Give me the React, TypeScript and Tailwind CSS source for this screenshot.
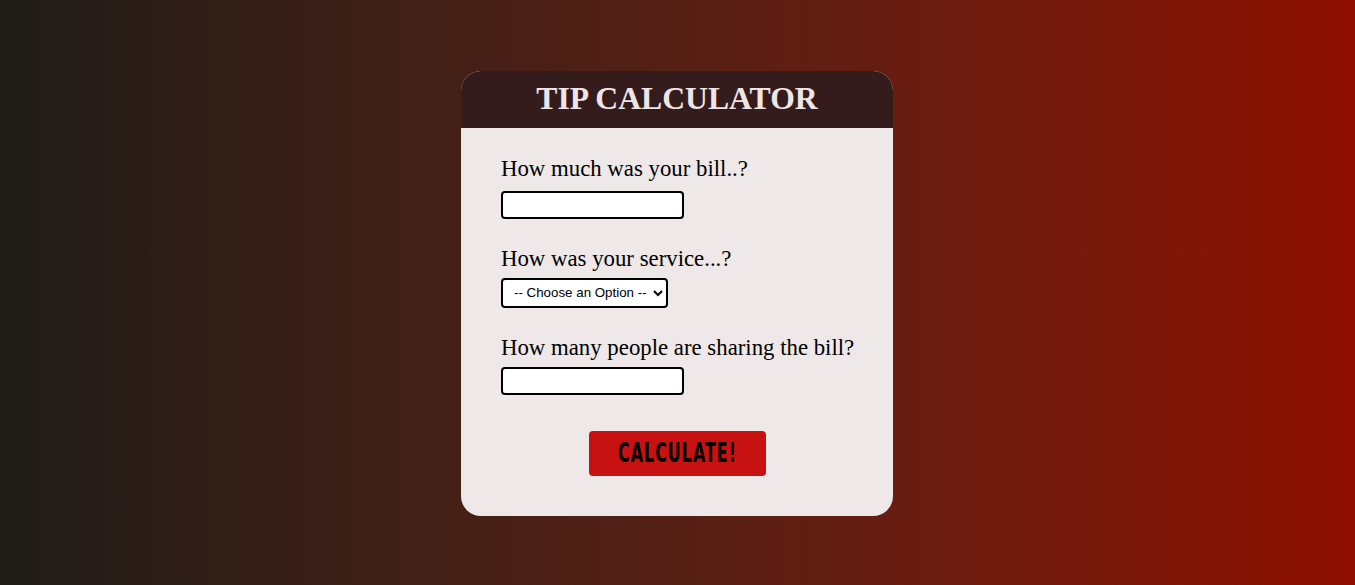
import { FC } from 'react'

const Label: FC<{ text: string }> = ({ text }) => (
  <label className="block whitespace-nowrap text-[22.8px] leading-[28px] text-black">{text}</label>
)

export default function App() {
  return (
    <main className="h-[585px] w-full flex items-center justify-center pr-[1px] pt-[1px] bg-gradient-to-r from-[#1f1c18] to-[#8e0e00] font-['Liberation_Serif',serif]">
      <div className="w-[432px] rounded-[20px] overflow-hidden bg-[#eee8e8]">
        <header className="h-[57px] bg-[#351c1c] flex items-center justify-center">
          <h1 className="text-[31.7px] font-bold text-[#eee6e6]">TIP CALCULATOR</h1>
        </header>
        <form className="px-10 pt-[27px] pb-10 flex flex-col" onSubmit={(e) => e.preventDefault()}>
          <Label text="How much was your bill..?" />
          <input
            type="text"
            className="mt-[8px] w-[183px] h-[28px] border-2 border-black rounded-[4px] bg-white outline-none"
          />
          <div className="mt-[26px]">
            <Label text="How was your service...?" />
          </div>
          <select className="mt-[5px] w-[167px] h-[30px] border-2 border-black rounded-[4px] bg-white pl-[7px] text-[13.33px] font-['Liberation_Sans',Arial,sans-serif] text-black">
            <option>-- Choose an Option --</option>
            <option>30% - Outstanding</option>
            <option>20% - Good</option>
            <option>15% - It was OK</option>
            <option>10% - Bad</option>
            <option>5% - Terrible</option>
          </select>
          <div className="mt-[26px]">
            <Label text="How many people are sharing the bill?" />
          </div>
          <input
            type="text"
            className="mt-[5px] w-[183px] h-[28px] border-2 border-black rounded-[4px] bg-white outline-none"
          />
          <button
            type="submit"
            className="mt-[36px] self-center w-[177px] h-[45px] rounded-[4px] bg-[#c81111] text-black flex items-center justify-center"
          >
            <span className="inline-block scale-x-[0.68] text-[26px] leading-none font-bold uppercase tracking-[1.5px] font-['DejaVu_Sans_Condensed','DejaVu_Sans',sans-serif] whitespace-nowrap">
              Calculate!
            </span>
          </button>
        </form>
      </div>
    </main>
  )
}
